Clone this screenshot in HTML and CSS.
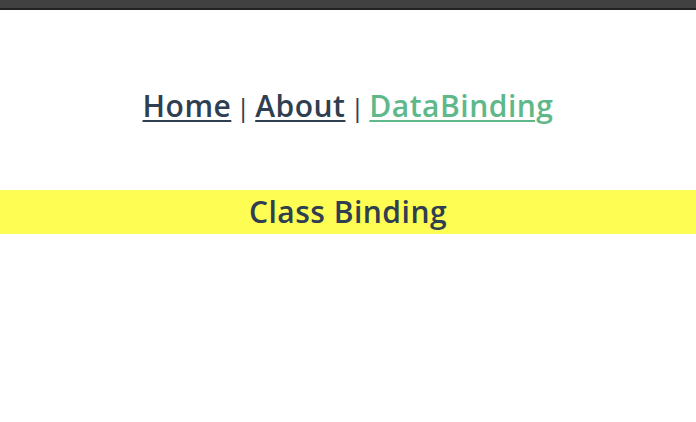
FILE: index.html
```html
<!DOCTYPE html>
<html lang="en">
<head>
<meta charset="utf-8">
<title>Class Binding</title>
<link rel="stylesheet" href="styles.css">
</head>
<body>
<div class="chrome"></div>
<div id="app">
  <nav class="nav">
    <a href="#" class="nav-link">Home</a> <span class="sep">|</span> <a href="#" class="nav-link">About</a> <span class="sep">|</span> <a href="#" class="nav-link active">DataBinding</a>
  </nav>
  <h1 class="title">Class Binding</h1>
</div>
</body>
</html>
```
FILE: styles.css
```css
html, body {
  margin: 0;
  padding: 0;
  background: #ffffff;
}
body {
  font-family: "Open Sans", "Noto Sans", sans-serif;
  color: #2f3e50;
}
.chrome {
  height: 8px;
  background: #414141;
  border-bottom: 2px solid #232323;
}
#app {
  text-align: center;
}
.nav {
  padding-top: 75px;
  font-size: 30px;
  line-height: 42px;
  color: #2f3e50;
  word-spacing: -3px;
}
.sep {
  font-weight: 400;
  font-size: 26px;
  color: #2f3e50;
}
.nav-link {
  font-weight: 600;
  letter-spacing: 0.5px;
  color: #2f3e50;
  text-decoration: underline;
  text-decoration-thickness: 2px;
  text-underline-offset: 3px;
}
.nav-link.active {
  color: #5eb88a;
}
.title {
  margin: 62px 0 0;
  font-size: 30px;
  line-height: 44px;
  font-weight: 600;
  letter-spacing: 0.5px;
  background: #fefd54;
}
```
